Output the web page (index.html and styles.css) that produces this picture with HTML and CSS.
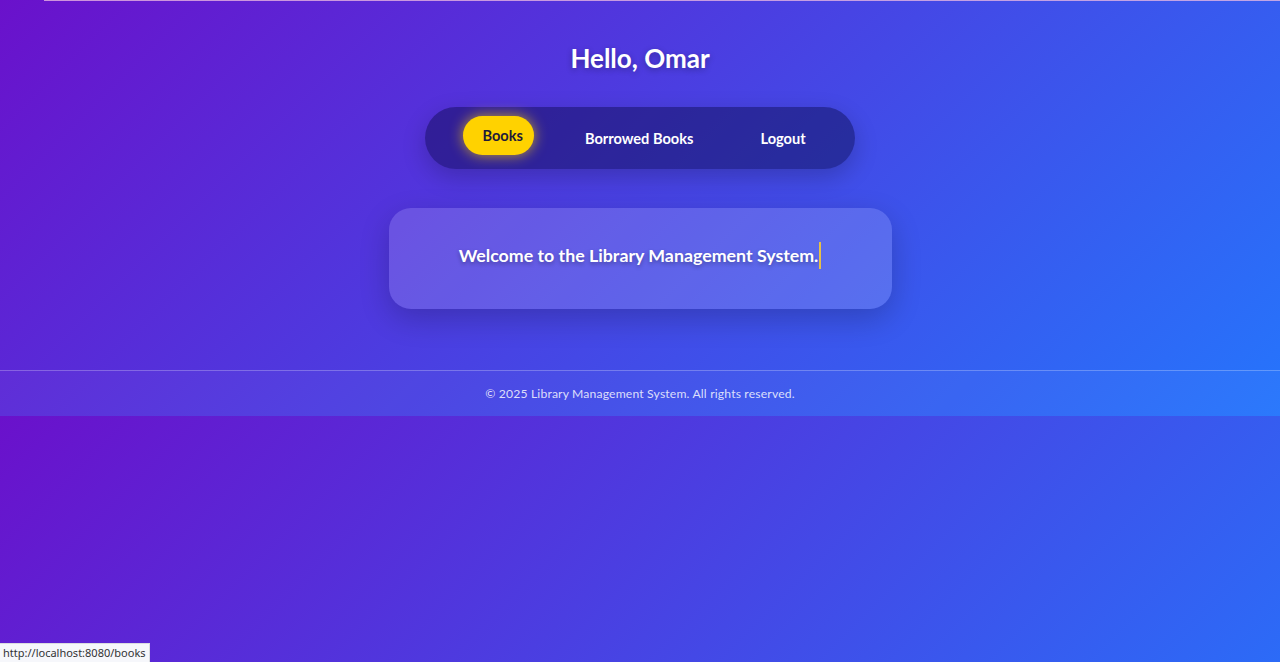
FILE: index.html
```html
<!DOCTYPE html>
<html lang="en">
<head>
<meta charset="utf-8">
<title>Library Management System</title>
<link rel="stylesheet" href="styles.css">
</head>
<body>
<div class="loadbar"></div>
<div class="page">
  <header class="header">
    <h1 class="greeting">Hello, Omar</h1>
    <nav class="nav">
      <a class="nav-link active" href="#">Books</a>
      <a class="nav-link" href="#">Borrowed Books</a>
      <a class="nav-link" href="#">Logout</a>
    </nav>
  </header>
  <main class="main">
    <section class="card">
      <p class="welcome"><span class="typed">Welcome to the Library Management System.</span></p>
    </section>
  </main>
  <footer class="footer">
    <p class="copy">© 2025 Library Management System. All rights reserved.</p>
  </footer>
</div>
<div class="status">http://localhost:8080/books</div>
</body>
</html>
```

FILE: styles.css
```css
html {
  margin: 0;
}
body {
  margin: 0;
  font-family: "Lato", "Liberation Sans", sans-serif;
  color: #fff;
  background: linear-gradient(135deg, #6a11cb 0%, #2575fc 100%);
}
.loadbar {
  position: fixed;
  top: 0;
  left: 44px;
  right: 0;
  height: 1px;
  background: rgba(240, 190, 225, 0.75);
}
.page {
  display: flex;
  flex-direction: column;
  align-items: center;
}
.header {
  display: flex;
  flex-direction: column;
  align-items: center;
  padding-top: 40px;
}
.greeting {
  margin: 0;
  font-size: 26px;
  line-height: 36px;
  font-weight: 700;
  text-shadow: 0 2px 6px rgba(0, 0, 0, 0.3);
}
.nav {
  margin-top: 31px;
  display: flex;
  align-items: center;
  gap: 35px;
  padding: 12px 33px 11px 38px;
  border-radius: 31px;
  background: rgba(0, 0, 50, 0.4);
  box-shadow: 0 8px 24px rgba(0, 0, 0, 0.2);
}
.nav-link {
  display: block;
  padding: 10px 16px;
  line-height: 19px;
  font-size: 14.6px;
  font-weight: 700;
  color: #fff;
  text-decoration: none;
  border-radius: 20px;
}
.nav-link.active {
  padding: 10px 11px 10px 19px;
  background: #ffd200;
  color: #1f1a3a;
  transform: translateY(-3px);
  box-shadow: 0 0 14px rgba(255, 210, 0, 0.7);
}
.main {
  margin-top: 39px;
}
.card {
  width: 503px;
  box-sizing: border-box;
  padding: 34px 20px 40px;
  border-radius: 22px;
  background: rgba(255, 255, 255, 0.15);
  box-shadow: 0 10px 30px rgba(0, 0, 0, 0.2);
  text-align: center;
}
.welcome {
  margin: 0;
  font-size: 17.8px;
  line-height: 27px;
  font-weight: 700;
  text-shadow: 0 2px 4px rgba(0, 0, 0, 0.3);
}
.typed {
  display: inline-block;
  padding-right: 1px;
  border-right: 2px solid #e6c04a;
}
.footer {
  align-self: stretch;
  margin-top: 61px;
  border-top: 1px solid rgba(255, 255, 255, 0.25);
  background: rgba(255, 255, 255, 0.03);
  height: 45px;
  display: flex;
  align-items: center;
  justify-content: center;
}
.copy {
  margin: 0;
  font-size: 12.2px;
  color: rgba(255, 255, 255, 0.82);
  letter-spacing: 0.15px;
}
.status {
  position: fixed;
  left: 0;
  bottom: 0;
  padding: 1px 3px 2px 3px;
  font-family: "Noto Sans", "Liberation Sans", sans-serif;
  font-size: 11px;
  line-height: 15px;
  color: #333;
  background: #f6f7fb;
  border: 1px solid #dadce0;
  border-left: 0;
  border-bottom: 0;
}
```
